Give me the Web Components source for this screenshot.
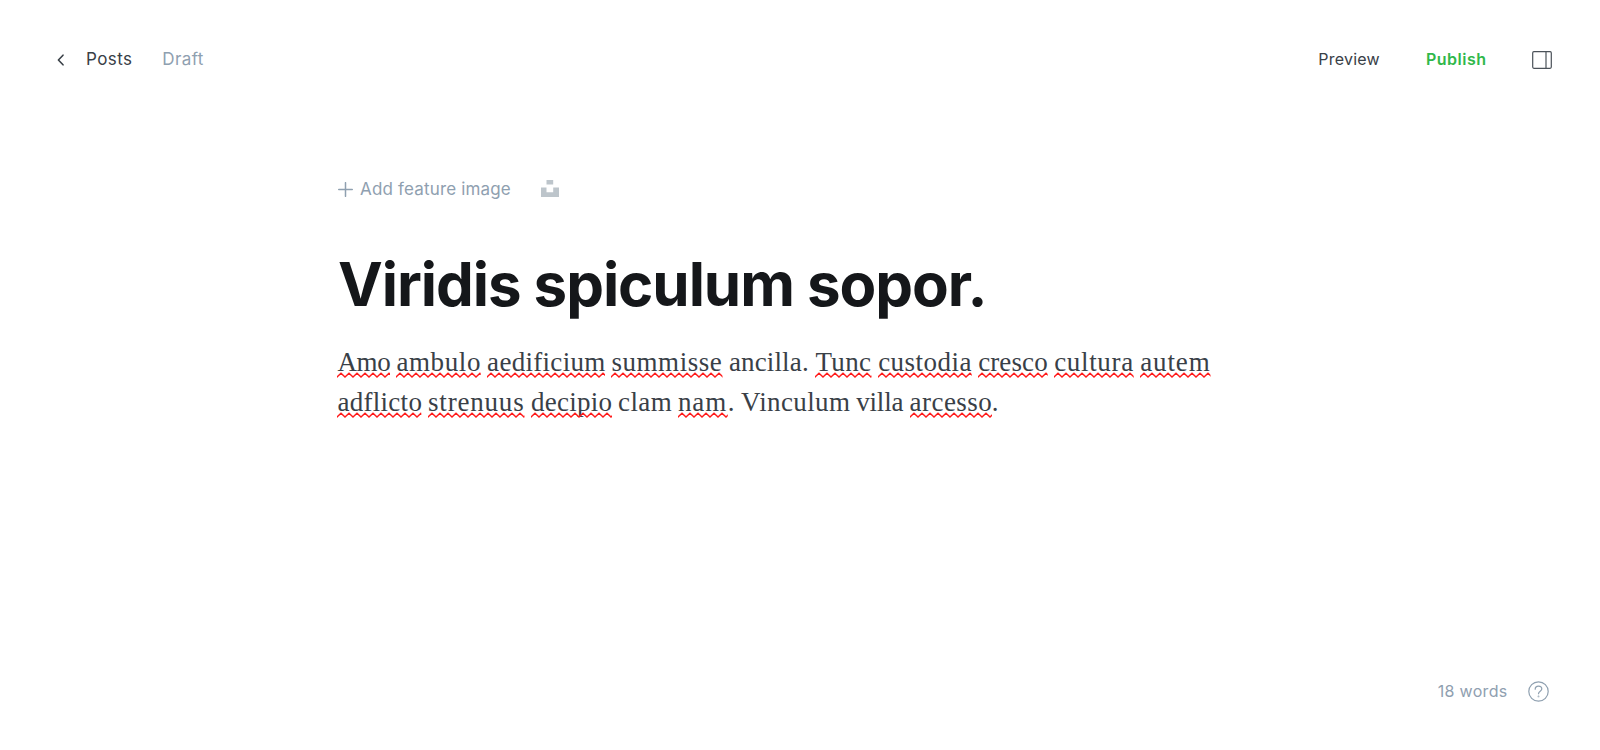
<!DOCTYPE html>
<html lang="en"><head><meta charset="utf-8"><title>Editor</title>
<style>html,body{margin:0;height:100%;background:#fff}body{font-family:Inter,sans-serif;overflow:hidden}</style></head>
<body>
<post-editor></post-editor>
<script>
const define=(name,html,setup)=>customElements.define(name,class extends HTMLElement{
  constructor(){super();this.attachShadow({mode:'open'}).innerHTML=html;}
  connectedCallback(){if(setup)setup(this,this.shadowRoot);}
});
define('editor-label',`<style>:host{display:block;font-size:17px;line-height:24px;letter-spacing:.17px;color:#394047;white-space:nowrap}:host([muted]){color:#8fa0b0}:host([primary]){color:#30b84a;font-weight:600}</style><slot></slot>`);
define('editor-header',`<style>:host{display:flex;align-items:center;height:119px;box-sizing:border-box;padding:0 48px 0 57px}
svg{display:block;flex:none}.posts,.draft{padding-bottom:2px;letter-spacing:.4px}.posts{margin-left:20px}.draft{margin-left:30px}.right{display:flex;align-items:center;margin-left:auto}.right editor-label{font-size:16px;letter-spacing:.25px;padding-bottom:2px}.right .pub{margin:0 45.5px 0 46px;letter-spacing:.5px}</style>
<svg width="9" height="12" viewBox="0 0 9 12" fill="none" stroke="#394047" stroke-width="1.6" stroke-linecap="round" stroke-linejoin="round"><path d="M6 1.2 1.4 6 6 10.8"/></svg>
<editor-label class="posts">Posts</editor-label><editor-label class="draft" muted>Draft</editor-label>
<div class="right"><editor-label>Preview</editor-label><editor-label class="pub" primary>Publish</editor-label>
<svg width="20" height="18" viewBox="0 0 20 18" fill="none" stroke="#4b5259" stroke-width="1.2"><rect x=".7" y=".7" width="18.6" height="16.6" rx="1.2"/><path d="M14 1v16"/></svg></div>`);
define('feature-image',`<style>:host{display:flex;align-items:center;height:24px}svg{display:block}.unsplash{margin-bottom:2px}editor-label{margin:0 30px 0 7px}</style>
<svg width="15" height="15" viewBox="0 0 15 15" stroke="#8fa0b0" stroke-width="1.5" stroke-linecap="round"><path d="M7.5.7v13.6M.7 7.5h13.6"/></svg><editor-label muted>Add feature image</editor-label>
<svg class="unsplash" width="18" height="17" viewBox="0 0 18 17" fill="#bdc5cb"><path d="M5.5 0h6.7v4.6H5.5zM0 7.5h5.5v4.8h6.7V7.5H18V17H0z"/></svg>`);
define('post-title',`<style>:host{display:block}h1{margin:0;font-size:60px;line-height:66px;font-weight:700;letter-spacing:-1.06px;color:#15171a;white-space:nowrap}</style><h1><slot></slot></h1>`);
define('post-word',`<style>:host{display:block;height:40px;flex:none;white-space:nowrap;position:relative}span{display:inline-block}svg{display:none;position:absolute;left:0;top:30px;width:100%;height:6px}:host([misspelled]) svg{display:block}</style><span><slot></slot></span><svg><defs><pattern id="w" width="8" height="6" patternUnits="userSpaceOnUse"><path d="M-4 1.2 0 5 4 1.2 8 5 12 1.2" fill="none" stroke="#ff1a1a" stroke-width="1.4"/></pattern></defs><rect width="100%" height="6" fill="url(#w)"/></svg>`,
(el,root)=>{const w=+el.getAttribute('w');el.style.width=w+'px';const s=root.querySelector('span');s.style.letterSpacing=(w-s.offsetWidth)/el.textContent.length+'px';});
// each entry: text, width, misspelled, gap after
const lines=[[['Amo',53,1,6],['ambulo',84.7,1,6],['aedificium',118,1,6.3],['summisse',111.5,1,6],['ancilla.',80.2,0,6.3],['Tunc',56.5,1,6.3],['custodia',93.7,1,6.3],['cresco',69.7,1,6.3],['cultura',79.7,1,6.3],['autem',70.5,1,0]],
[['adflicto',84.3,1,6.3],['strenuus',96.5,1,6.4],['decipio',81,1,6.2],['clam',53.5,0,6.3],['nam',49.8,1,0],['.',7,0,6.3],['Vinculum',109,0,6.3],['villa',47,0,6.3],['arcesso',82.2,1,0],['.',7,0,0]]];
define('post-body',`<style>:host{display:block;font:27px/40px "Liberation Serif",serif;color:#394047}.line{display:flex;height:40px}</style>`,(el,root)=>{
  for(const line of lines){const row=document.createElement('div');row.className='line';root.append(row);
    for(const [t,w,bad,gap] of line){const x=document.createElement('post-word');x.textContent=t;x.setAttribute('w',w);if(bad)x.setAttribute('misspelled','');x.style.marginRight=gap+'px';row.append(x);}}
});
define('editor-footer',`<style>:host{display:flex;align-items:center;justify-content:flex-end;gap:20px;padding:0 51.5px 47px 0;height:24px}svg{display:block}editor-label{font-size:16px;letter-spacing:.3px}</style>
<editor-label muted>18 words</editor-label>
<svg width="21" height="21" viewBox="0 0 21 21" fill="none" stroke="#8fa0b0" stroke-width="1.2" stroke-linecap="round"><circle cx="10.5" cy="10.5" r="9.7"/><path d="M7.2 8.2c0-1.8 1.5-3.1 3.3-3.1s3.3 1.2 3.3 2.9c0 2.2-3.3 2.3-3.3 4.7"/><circle cx="10.5" cy="15.4" r=".3"/></svg>`);
define('post-editor',`<style>:host{display:flex;flex-direction:column;height:750px}main{flex:1;padding:58px 0 0 338px}post-title{margin-top:50px}post-body{margin:25px 0 0 -.6px}</style>
<editor-header></editor-header><main><feature-image></feature-image><post-title>Viridis spiculum sopor.</post-title><post-body></post-body></main><editor-footer></editor-footer>`);
</script></body></html>
